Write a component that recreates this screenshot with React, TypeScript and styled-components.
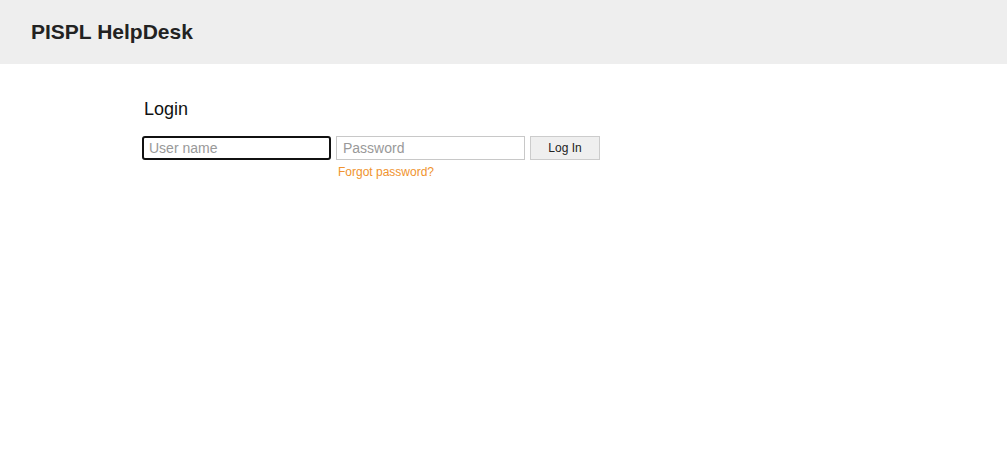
import React from 'react'
import styled, { createGlobalStyle, css } from 'styled-components'

const GlobalStyle = createGlobalStyle`
  body {
    margin: 0;
    background: #fff;
    font-family: "Liberation Sans", Arial, sans-serif;
  }
`

const Header = styled.header`
  height: 64px;
  background: #eeeeee;
  display: flex;
  align-items: center;
  padding-left: 31px;
`

const Brand = styled.h1`
  margin: 0;
  font-size: 21px;
  font-weight: bold;
  color: #222;
`

const Main = styled.main`
  padding: 35px 0 0 142px;
`

const Title = styled.h2`
  margin: 0 0 0 2px;
  font-size: 18px;
  font-weight: normal;
  color: #111;
  line-height: 21px;
`

const Form = styled.form`
  display: flex;
  align-items: flex-start;
  gap: 5px;
  margin-top: 16px;
`

const Field = styled.div`
  display: flex;
  flex-direction: column;
`

const Input = styled.input<{ $focused?: boolean }>`
  box-sizing: border-box;
  width: 189px;
  height: 24px;
  padding: 0 6px;
  border: 1px solid #c8c8c8;
  border-radius: 0;
  font-family: "Liberation Sans", Arial, sans-serif;
  font-size: 14px;
  color: #333;
  outline: none;
  &::placeholder {
    color: #999;
  }
  ${p => p.$focused && css`
    border: 2px solid #111;
    border-radius: 3px;
    padding: 0 5px;
  `}
`

const ForgotLink = styled.a`
  margin: 5px 0 0 2px;
  font-size: 12px;
  color: #f0932e;
  text-decoration: none;
`

const Button = styled.button`
  box-sizing: border-box;
  width: 70px;
  height: 24px;
  background: #efefef;
  border: 1px solid #cccccc;
  font-family: "Liberation Sans", Arial, sans-serif;
  font-size: 12px;
  color: #222;
  padding: 0;
`

export default function App() {
  return (
    <>
      <GlobalStyle />
      <Header>
        <Brand>PISPL HelpDesk</Brand>
      </Header>
      <Main>
        <Title>Login</Title>
        <Form onSubmit={e => e.preventDefault()}>
          <Input $focused autoFocus placeholder="User name" />
          <Field>
            <Input type="password" placeholder="Password" />
            <ForgotLink href="#">Forgot password?</ForgotLink>
          </Field>
          <Button type="submit">Log In</Button>
        </Form>
      </Main>
    </>
  )
}
